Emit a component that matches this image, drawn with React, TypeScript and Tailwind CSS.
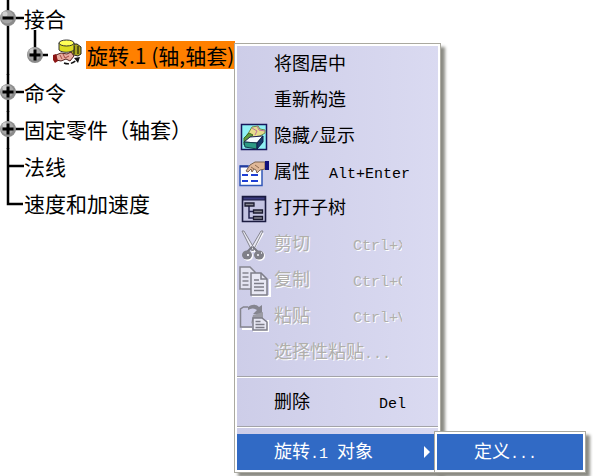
import type { ReactNode } from 'react';
import clsx from 'clsx';

type MenuEntry = {
  label: string;
  icon?: ReactNode;
  shortcut?: string;
  disabled?: boolean;
};

function ShowHideIcon() {
  return (
    <svg viewBox="0 0 30 30" className="size-full" aria-hidden="true">
      <rect x="2.5" y="3.5" width="25" height="25" fill="#8ff0f4" stroke="#17175c" strokeWidth="1.5" />
      <path d="M10 11 13 6l6-1 2 3 5 1v3l-5 3-7 1-6 4-3-2z" fill="#e6dc8c" stroke="#6c8a4c" />
      <path d="M18 5l2 4 6 1M13 7l5 3-2 4" fill="none" stroke="#c0709c" />
      <path d="M5 17l5-5 4 2-5 4-1 4-3 2z" fill="#5f9a3c" stroke="#3f6b22" />
      <path d="m5 21 6-5 13-1-6 7z" fill="#f6fdff" stroke="#225" />
      <path d="m5 21 13 1v6L6 26z" fill="#2c9a84" stroke="#123c4c" />
      <path d="m18 22 6-7v6l-6 7z" fill="#173a6c" stroke="#10204c" />
    </svg>
  );
}

function PropertiesIcon() {
  return (
    <svg viewBox="0 0 30 30" className="size-full overflow-visible" aria-hidden="true">
      <path d="M1 9h22v19.500H1z" fill="#fff" stroke="#3358b8" strokeWidth="1.500" />
      <path d="M1 9.500h8" stroke="#233a9c" strokeWidth="2" />
      <path d="M3 18h6M3 24h6M12 18h7M12 24h7" stroke="#1f3fd4" strokeWidth="2" />
      <path d="m7 14 4-6 5-3h10v7l-5 1-3 3-1-3-2-1-2 3-1-3-3 3z" fill="#e0b898" stroke="#7c6450" />
      <path d="m12 10 3 2M16 8l4 3" fill="none" stroke="#8e6a50" />
      <path d="M26 4h4v9h-4z" fill="#10107c" />
    </svg>
  );
}

function SubtreeIcon() {
  return (
    <svg viewBox="0 0 30 30" className="size-full" aria-hidden="true">
      <path d="M3.500 3.500h23v25h-23z" fill="#c4c4e2" stroke="#1b1b40" strokeWidth="1.600" />
      <path d="M4 4h22v3H4z" fill="#3c3c80" stroke="#1b1b40" />
      <path d="M10 12v13h5M10 18.500h5" fill="none" stroke="#23234f" strokeWidth="1.500" />
      <path d="M6 10h9v3H6zM14.500 17h9v3h-9zM14.500 23.500h9v3h-9z" fill="#85858f" stroke="#1b1b30" strokeWidth="1.300" />
    </svg>
  );
}

function CutIcon() {
  return (
    <svg viewBox="0 0 30 30" className="size-full overflow-visible" aria-hidden="true">
      <g fill="none" stroke="#fff" strokeWidth="2" transform="translate(1 1)">
        <path d="m4 3 11 19M23 3 12 22" />
        <circle cx="8" cy="26" r="4" />
        <circle cx="20" cy="26" r="4" />
      </g>
      <path d="M3 2h2l10 17-2 3zM24 2h-2L12 19l2 3z" fill="#e9e9f3" stroke="#85858f" />
      <path d="m14 18 5 5M13 18l-5 5" stroke="#777781" strokeWidth="2" />
      <ellipse cx="8" cy="26" rx="5" ry="4.500" fill="#808088" />
      <ellipse cx="20" cy="26" rx="5" ry="4.500" fill="#808088" />
      <path d="M8 26h2M9 25v2M18 26h2M22 24h1" stroke="#f4f4fa" strokeWidth="1.300" />
    </svg>
  );
}

function CopyIcon() {
  return (
    <svg viewBox="0 0 30 30" className="size-full overflow-visible" aria-hidden="true">
      <path d="M2 25V3M13 31h18V14" fill="none" stroke="#fff" strokeWidth="2" />
      <path d="M1 2h10l5 5v17H1z" fill="#e3e3f0" stroke="#85858f" strokeWidth="1.500" />
      <path d="M3.500 8h6M3.500 12h6M3.500 16h6M3.500 20h6" stroke="#85858f" strokeWidth="1.500" />
      <path d="M12 8h10l6 6v16H12z" fill="#e8e8f4" stroke="#7d7d88" strokeWidth="1.500" />
      <path d="M22 8v6h6M15 15h5M15 18.500h10M15 22h10M15 25.500h10" fill="none" stroke="#7d7d88" strokeWidth="1.500" />
    </svg>
  );
}

function PasteIcon() {
  return (
    <svg viewBox="0 0 30 30" className="size-full overflow-visible" aria-hidden="true">
      <path d="M3 28h10M14 30h15V19" fill="none" stroke="#fff" strokeWidth="2" />
      <path d="M13 26H1.500V8l3-2H9" fill="none" stroke="#85858f" strokeWidth="1.500" />
      <path d="M9 6c4-3 8-3 11 0l3-2v9h-9l4-4c-3-2-6-2-9 0z" fill="#85858f" />
      <path d="m14 14 10-3v7l-8-1-4 6z" fill="#9b9ba4" />
      <path d="M14 17h9l5 4v8H14z" fill="#e8e8f4" stroke="#7d7d88" strokeWidth="1.500" />
      <path d="M16.500 20.500h5M16.500 23.500h9M16.500 26.500h9" stroke="#7d7d88" strokeWidth="1.500" />
    </svg>
  );
}

function RevoluteIcon() {
  return (
    <svg viewBox="0 0 30 28" className="h-7 w-[30px] shrink-0" aria-hidden="true">
      <path d="M19 5h6l4 3v7l-3 2-8-2z" fill="#a9a51e" stroke="#222" />
      <path d="M22 7v8M26 7v8" stroke="#3b3a10" strokeWidth="1.500" />
      <path d="M7 4v7c3 3 11 3 15 0V4z" fill="#dcdc20" stroke="#333" />
      <ellipse cx="14.500" cy="4" rx="7.500" ry="3" fill="#ffff58" stroke="#333" />
      <path d="m4 16 5-2 6 1 4-2 3 4-4 5-4-2-5 2-5-1z" fill="#e8aca0" stroke="#52201c" />
      <path d="m11 15 2 4 4-2M8 16l2 4" fill="none" stroke="#a64a42" />
      <path d="m1 16 3-1 2 7-3 2-2-3z" fill="#8c1414" />
      <path d="M12 24c5 2 9 0 13-3" fill="none" stroke="#111" strokeWidth="1.500" strokeDasharray="5 2" />
      <path d="m22 19 6-1-2 6z" fill="#111" />
    </svg>
  );
}

const entries: MenuEntry[] = [
  { label: '将图居中' },
  { label: '重新构造' },
  { label: '隐藏/显示', icon: <ShowHideIcon /> },
  { label: '属性', icon: <PropertiesIcon />, shortcut: 'Alt+Enter' },
  { label: '打开子树', icon: <SubtreeIcon /> },
  { label: '剪切', icon: <CutIcon />, shortcut: 'Ctrl+X', disabled: true },
  { label: '复制', icon: <CopyIcon />, shortcut: 'Ctrl+C', disabled: true },
  { label: '粘贴', icon: <PasteIcon />, shortcut: 'Ctrl+V', disabled: true },
  { label: '选择性粘贴...', disabled: true },
];

// Latin runs are half as wide as a Chinese character
function MenuText({ text }: { text: string }) {
  return (
    <span className="pb-1 whitespace-pre">
      {text.split(/([\x20-\x7e]+)/).map((part, i) =>
        i % 2 ? (
          <span key={i} className="font-['Liberation_Mono',monospace] text-[15px] leading-none">
            {part}
          </span>
        ) : (
          part
        ),
      )}
    </span>
  );
}

function MenuItem({ label, icon, shortcut, disabled }: MenuEntry) {
  return (
    <li>
      <button
        type="button"
        disabled={disabled}
        className={clsx(
          'flex h-9 w-full items-center gap-[5px] pl-0.5 text-left',
          disabled ? 'text-[#b0afab] [text-shadow:1px_1px_0_#fff]' : 'text-black',
        )}
      >
        <span className="size-[30px] shrink-0">{icon}</span>
        <MenuText text={label} />
        {shortcut && (
          <span
            className={clsx(
              'ml-auto flex',
              shortcut === 'Alt+Enter' && 'mr-7',
              shortcut === 'Del' && 'mr-8',
              disabled && 'mr-9 w-[49px] overflow-hidden',
            )}
          >
            <MenuText text={shortcut} />
          </span>
        )}
      </button>
    </li>
  );
}

function Separator() {
  return <li role="separator" className="my-1.5 h-0.5 border-t border-[#a3a3a8] bg-white" />;
}

function Gutter({ sign, last, drop }: { sign?: '+' | '-'; last?: boolean; drop?: boolean }) {
  return (
    <svg viewBox="0 0 24 37" className="h-[37px] w-6 shrink-0 overflow-visible" aria-hidden="true">
      <path
        d={drop ? 'M11 -8V17H24' : last ? 'M8 0V18H23' : 'M8 -1V37M8 17H24'}
        fill="none"
        stroke="#000"
        strokeWidth="2.500"
      />
      {sign && (
        <g transform={drop ? 'translate(11 17)' : 'translate(8 17)'}>
          <circle r="8" fill="#8c8c8c" />
          <circle cx="-1" cy="-1" r="6.500" fill="#a6a6a6" />
          <circle cx="-3" cy="-4" r="2.500" fill="#d0d0d0" />
          <path d={sign === '+' ? 'M-5.500 0H5.500M0 -5.500V5.500' : 'M-5.500 0H5.500'} stroke="#000" strokeWidth="3" />
        </g>
      )}
    </svg>
  );
}

function TreeRow({ label, sign, last }: { label: string; sign?: '+' | '-'; last?: boolean }) {
  return (
    <div className="flex h-[37px] items-center">
      {sign ? (
        <button type="button" aria-label={label}>
          <Gutter sign={sign} />
        </button>
      ) : (
        <Gutter last={last} />
      )}
      <span className="pb-1">{label}</span>
    </div>
  );
}

function SpecTree() {
  return (
    <ul className="pt-px text-[21px] leading-7 whitespace-nowrap">
      <li>
        <TreeRow label="接合" sign="-" />
        <ul>
          <li className="flex h-[37px] items-center">
            <svg viewBox="0 0 24 37" className="h-[37px] w-6 shrink-0" aria-hidden="true">
              <path d="M8 0V37" stroke="#000" strokeWidth="2.500" />
            </svg>
            <button type="button" aria-label="旋转.1" className="mr-1">
              <Gutter sign="+" drop />
            </button>
            <span className="pb-2">
              <RevoluteIcon />
            </span>
            <span className="mb-1 ml-1 bg-[#ff8000] px-px pt-px leading-[27px]">旋转.1 (轴,轴套)</span>
          </li>
        </ul>
      </li>
      <li>
        <TreeRow label="命令" sign="+" />
      </li>
      <li>
        <TreeRow label="固定零件（轴套）" sign="+" />
      </li>
      <li>
        <TreeRow label="法线" />
      </li>
      <li>
        <TreeRow label="速度和加速度" last />
      </li>
    </ul>
  );
}

function ContextMenu() {
  return (
    <ul className="absolute top-[43px] left-[234px] w-[207px] border border-[#aaa9a0] bg-linear-to-r from-[#cdcde8] to-[#dadaf1] p-0.5 text-lg leading-6 shadow-[4px_4px_3px_#8b8b84] outline-2 -outline-offset-3 outline-white">
      {entries.map((entry) => (
        <MenuItem key={entry.label} {...entry} />
      ))}
      <Separator />
      <MenuItem label="删除" shortcut="Del" />
      <Separator />
      <li className="relative">
        <button type="button" className="flex h-9 w-full items-center bg-[#316ac5] pr-2 pl-[37px] text-left text-white">
          <MenuText text="旋转.1 对象" />
          <svg viewBox="0 0 6 12" className="ml-auto h-3 w-1.5" aria-hidden="true">
            <path d="M0 0 6 6 0 12z" fill="#fff" />
          </svg>
        </button>
        <ul className="absolute -top-[3px] left-full -ml-1 w-[152px] border border-[#aaa9a0] bg-white p-0.5 shadow-[4px_4px_3px_#8b8b84]">
          <li>
            <button type="button" className="flex h-9 w-full items-center bg-[#316ac5] pl-[37px] text-left text-white">
              <MenuText text="定义..." />
            </button>
          </li>
        </ul>
      </li>
    </ul>
  );
}

export default function App() {
  return (
    <main className="relative min-h-screen overflow-hidden bg-white font-['Noto_Sans_CJK_SC',sans-serif] text-black">
      <SpecTree />
      <ContextMenu />
    </main>
  );
}
